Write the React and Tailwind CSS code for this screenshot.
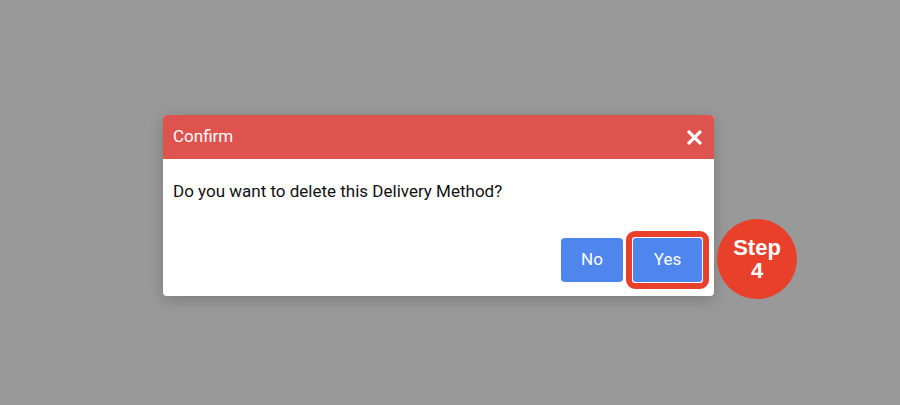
export default function App() {
  return (
    <div className="w-[900px] h-[405px] bg-[#999999] relative" style={{ fontFamily: 'Roboto, "Liberation Sans", sans-serif' }}>
      <div className="absolute left-[163px] top-[115px] w-[551px] h-[181px] bg-white rounded-[4px] shadow-[0_4px_16px_rgba(0,0,0,0.2)] flex flex-col">
        <div className="h-[44px] bg-[#de534d] rounded-t-[4px] flex items-center justify-between pl-[10px] pr-[12px]">
          <span className="text-white text-[17px]">Confirm</span>
          <svg width="15" height="15" viewBox="0 0 14 14">
            <path d="M2 2 L12 12 M12 2 L2 12" stroke="white" strokeWidth="3" strokeLinecap="square" />
          </svg>
        </div>
        <div className="pl-[10px] pt-[20px] text-[17px] text-[#111]">Do you want to delete this Delivery Method?</div>
        <div className="flex-1" />
        <div className="flex justify-end items-center pr-[13px] pb-[14px]">
          <button className="w-[62px] h-[44px] bg-[#4e86ed] text-white text-[17px] rounded-[4px]">No</button>
          <div className="ml-[3px] border-[6px] border-[#e8402a] rounded-[9px] p-[1px] -my-[8px] -mr-[8px]">
            <button className="w-[69px] h-[44px] bg-[#4e86ed] text-white text-[17px] rounded-[3px] block">Yes</button>
          </div>
        </div>
      </div>
      <div className="absolute left-[717px] top-[219px] w-[80px] h-[80px] rounded-full bg-[#e8402a] flex flex-col items-center justify-center text-white font-bold text-[22px] leading-[23px]" style={{ fontFamily: '"Liberation Sans", Arial, sans-serif' }}>
        <span>Step</span>
        <span>4</span>
      </div>
    </div>
  );
}
